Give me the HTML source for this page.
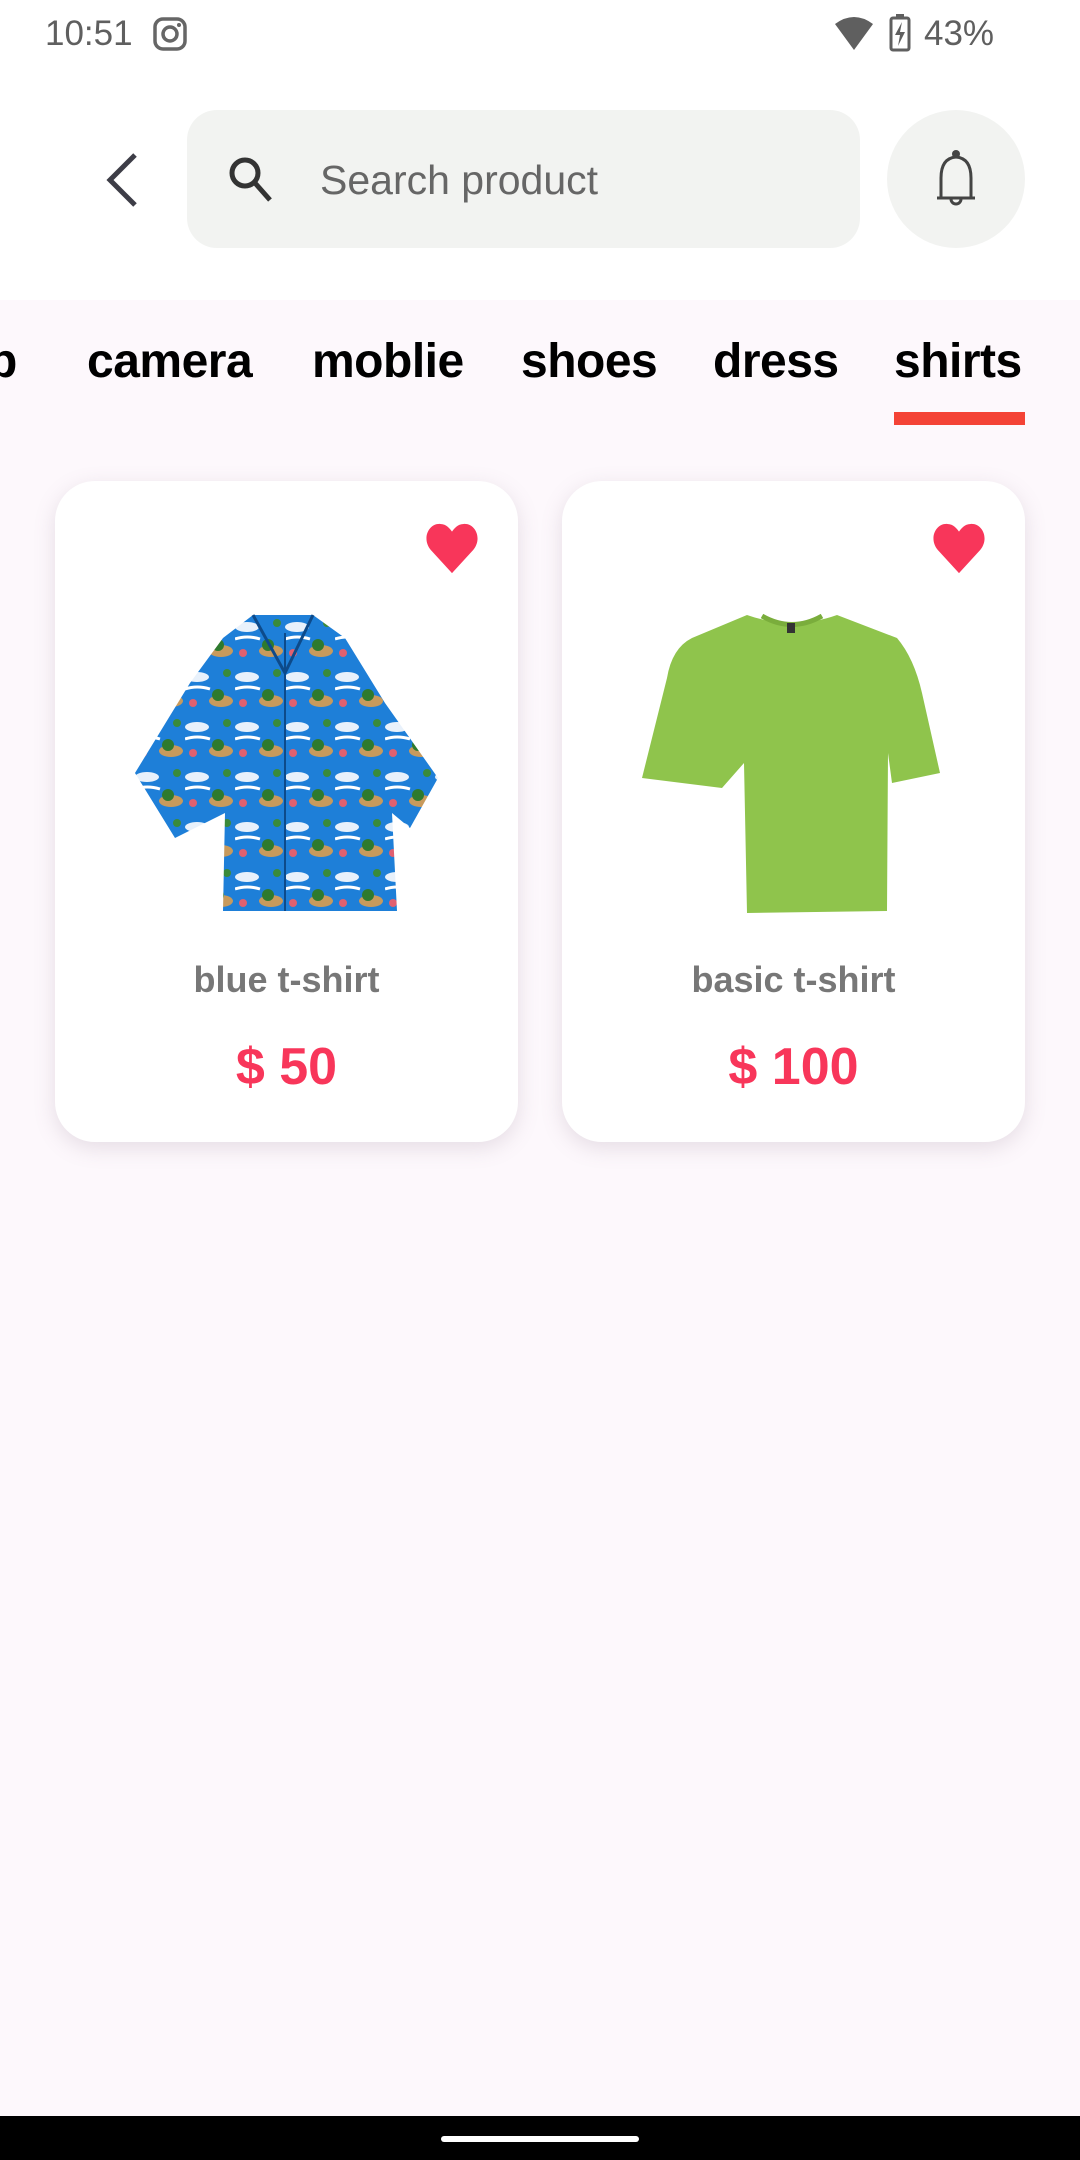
<!DOCTYPE html>
<html><head><meta charset="utf-8"><style>
*{margin:0;padding:0;box-sizing:border-box}
body{width:1080px;height:2160px;background:#fdf8fc;font-family:"Liberation Sans",Roboto,sans-serif;position:relative;overflow:hidden}
.abs{position:absolute}
.hdr{left:0;top:0;width:1080px;height:300px;background:#fff}
.tab{position:absolute;top:334px;font-size:48px;font-weight:bold;color:#000;white-space:nowrap;letter-spacing:-0.5px}
.card{position:absolute;top:481px;width:463px;height:661px;background:#fff;border-radius:40px;box-shadow:0 6px 22px rgba(120,100,120,0.18)}
.name{position:absolute;left:0;width:100%;text-align:center;top:478px;font-size:36px;font-weight:bold;color:#777}
.price{position:absolute;left:0;width:100%;text-align:center;top:556px;font-size:52px;font-weight:bold;color:#f8365a}
</style></head><body>
<div class="abs hdr"></div>
<div class="abs" style="left:45px;top:14px;font-size:35px;color:#5f5f5f">10:51</div>
<svg class="abs" style="left:152px;top:16px" width="36" height="36" viewBox="0 0 36 36"><rect x="3" y="3" width="30" height="30" rx="8" fill="none" stroke="#666" stroke-width="3.5"/><circle cx="18" cy="18" r="7" fill="none" stroke="#666" stroke-width="3.5"/><circle cx="27" cy="9" r="2" fill="#666"/></svg>
<svg class="abs" style="left:833px;top:14px" width="42" height="38" viewBox="0 0 42 38"><path d="M2 10 Q21 -4 40 10 L21 36 Z" fill="#5f5f5f"/></svg>
<svg class="abs" style="left:889px;top:14px" width="22" height="38" viewBox="0 0 22 38"><rect x="2" y="4" width="18" height="32" rx="2" fill="none" stroke="#5f5f5f" stroke-width="3"/><rect x="7" y="0" width="8" height="5" fill="#5f5f5f"/><path d="M13 8 L6 21 L11 21 L9 32 L16 18 L11 18 Z" fill="#5f5f5f"/></svg>
<div class="abs" style="left:924px;top:14px;font-size:35px;color:#5f5f5f">43%</div>

<svg class="abs" style="left:100px;top:150px" width="44" height="60" viewBox="0 0 44 60"><path d="M35 5 L10 30 L35 55" fill="none" stroke="#3d3d47" stroke-width="5"/></svg>
<div class="abs" style="left:187px;top:110px;width:673px;height:138px;background:#f2f3f1;border-radius:30px"></div>
<svg class="abs" style="left:224px;top:152px" width="56" height="56" viewBox="0 0 56 56"><circle cx="21" cy="21" r="13" fill="none" stroke="#333" stroke-width="5"/><path d="M31 31 L46 48" stroke="#333" stroke-width="5"/></svg>
<div class="abs" style="left:320px;top:157px;font-size:41px;color:#666">Search product</div>
<div class="abs" style="left:887px;top:110px;width:138px;height:138px;background:#f2f3f1;border-radius:50%"></div>
<svg class="abs" style="left:930px;top:148px" width="52" height="64" viewBox="0 0 52 64"><circle cx="26" cy="6" r="4" fill="#444"/><path d="M26 9 C14 10 11 20 11 30 L11 50 L41 50 L41 30 C41 20 38 10 26 9 Z" fill="none" stroke="#444" stroke-width="3"/><path d="M7 50 L45 50" stroke="#444" stroke-width="3"/><path d="M21 51 A5 5 0 0 0 31 51" fill="none" stroke="#444" stroke-width="3"/></svg>

<div class="tab" style="left:-12px">p</div>
<div class="tab" style="left:87px">camera</div>
<div class="tab" style="left:312px">moblie</div>
<div class="tab" style="left:521px">shoes</div>
<div class="tab" style="left:713px">dress</div>
<div class="tab" style="left:894px">shirts</div>
<div class="abs" style="left:894px;top:412px;width:131px;height:13px;background:#f44336"></div>

<div class="card" style="left:55px">
<svg class="abs" style="left:368px;top:42px" width="58" height="52" viewBox="0 0 56 54"><path d="M28 52 L6 28 C-4 16 4 0 16 1 C22 1 26 6 28 9 C30 6 34 1 40 1 C52 0 60 16 50 28 Z" fill="#f8365a"/></svg>
<svg class="abs" style="left:80px;top:132px" width="305" height="305" viewBox="0 0 305 305"><defs><pattern id="p" width="50" height="50" patternUnits="userSpaceOnUse"><rect width="50" height="50" fill="#1e7fd8"/><ellipse cx="12" cy="14" rx="12" ry="5" fill="#e8f1fb"/><ellipse cx="36" cy="38" rx="12" ry="6" fill="#c89a5c"/><circle cx="33" cy="32" r="6" fill="#2e7a2e"/><circle cx="8" cy="40" r="4" fill="#e06070"/><circle cx="42" cy="10" r="4" fill="#3a8a3a"/><path d="M0 26 Q12 22 25 26" stroke="#fff" stroke-width="3" fill="none"/></pattern></defs><path d="M118 2 L178 2 L210 25 L250 90 L303 165 L275 215 L257 200 L262 298 L88 298 L90 200 L40 225 L0 160 L55 70 L88 25 Z" fill="url(#p)"/><path d="M150 20 L150 298" stroke="#0d4a8a" stroke-width="2"/><path d="M118 2 L150 60 L178 2" fill="none" stroke="#0d4a8a" stroke-width="3"/></svg>
<div class="name">blue t-shirt</div>
<div class="price">$ 50</div>
</div>
<div class="card" style="left:562px">
<svg class="abs" style="left:368px;top:42px" width="58" height="52" viewBox="0 0 56 54"><path d="M28 52 L6 28 C-4 16 4 0 16 1 C22 1 26 6 28 9 C30 6 34 1 40 1 C52 0 60 16 50 28 Z" fill="#f8365a"/></svg>
<svg class="abs" style="left:80px;top:132px" width="305" height="305" viewBox="0 0 305 305"><path d="M105 2 Q150 18 195 2 L255 25 Q272 45 280 80 L298 160 L250 170 L246 140 L245 298 L105 300 L102 150 L80 175 L0 165 L25 65 Q30 35 50 25 Z" fill="#8fc44c"/><path d="M120 3 Q150 20 180 3" fill="none" stroke="#7aad3c" stroke-width="5"/><rect x="145" y="10" width="8" height="10" fill="#333"/></svg>
<div class="name">basic t-shirt</div>
<div class="price">$ 100</div>
</div>

<div class="abs" style="left:0;top:2116px;width:1080px;height:44px;background:#000"></div>
<div class="abs" style="left:441px;top:2136px;width:198px;height:6px;border-radius:3px;background:#fff"></div>
</body></html>
